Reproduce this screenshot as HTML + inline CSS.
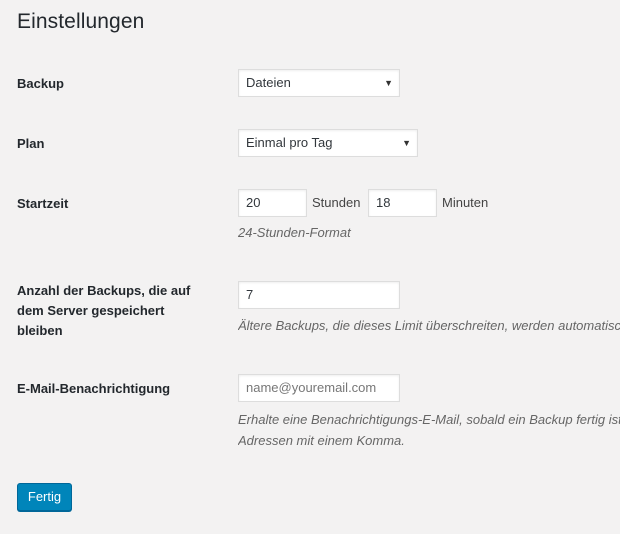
<!DOCTYPE html>
<html><head><meta charset="utf-8"><style>
html,body{margin:0;padding:0}
body{width:620px;height:534px;background:#f3f2f2;font-family:"Liberation Sans",sans-serif;font-size:13px;color:#23282d;overflow:hidden}
#w{position:relative;width:620px;height:534px;overflow:hidden}
.a{position:absolute;white-space:nowrap}
h1{position:absolute;left:17px;top:10px;margin:0;font-size:21px;font-weight:normal;color:#23282d;letter-spacing:0.1px}
.l{font-weight:bold;font-size:13px;color:#23282d}
.box{position:absolute;background:#fff;border:1px solid #ddd;box-shadow:inset 0 1px 2px rgba(0,0,0,.07);box-sizing:border-box;padding-left:7px;line-height:26px;font-size:13px;color:#32373c}
.arr{position:absolute;right:6px;top:0;font-size:9px;color:#333}
.d{font-style:italic;color:#666;font-size:13px}
.btn{position:absolute;left:17px;top:483px;width:55px;height:28px;background:#0085ba;border:1px solid #006799;border-radius:3px;box-sizing:border-box;color:#fff;font-size:13px;text-align:center;line-height:26px;box-shadow:0 1px 0 #006799}
</style></head><body><div id="w">
<h1>Einstellungen</h1>
<div class="a l" style="left:17px;top:76px">Backup</div>
<div class="box" style="left:238px;top:69px;width:162px;height:28px">Dateien<span class="arr">▼</span></div>
<div class="a l" style="left:17px;top:136px">Plan</div>
<div class="box" style="left:238px;top:129px;width:180px;height:28px">Einmal pro Tag<span class="arr">▼</span></div>
<div class="a l" style="left:17px;top:196px">Startzeit</div>
<div class="box" style="left:238px;top:189px;width:69px;height:28px">20</div>
<div class="a" style="left:312px;top:195px;color:#444">Stunden</div>
<div class="box" style="left:368px;top:189px;width:69px;height:28px">18</div>
<div class="a" style="left:442px;top:195px;color:#444">Minuten</div>
<div class="a d" style="left:238px;top:225px">24-Stunden-Format</div>
<div class="a l" style="left:17px;top:281px;line-height:20px">Anzahl der Backups, die auf<br>dem Server gespeichert<br>bleiben</div>
<div class="box" style="left:238px;top:281px;width:162px;height:28px">7</div>
<div class="a d" style="left:238px;top:318px;width:382px;overflow:hidden">Ältere Backups, die dieses Limit überschreiten, werden automatisch gelöscht.</div>
<div class="a l" style="left:17px;top:381px">E-Mail-Benachrichtigung</div>
<div class="box" style="left:238px;top:374px;width:162px;height:28px;color:#777">name@youremail.com</div>
<div class="a d" style="left:238px;top:409px;line-height:21px;width:382px;overflow:hidden">Erhalte eine Benachrichtigungs-E-Mail, sobald ein Backup fertig ist. Trenne mehrere<br>Adressen mit einem Komma.</div>
<div class="btn">Fertig</div>
</div></body></html>
